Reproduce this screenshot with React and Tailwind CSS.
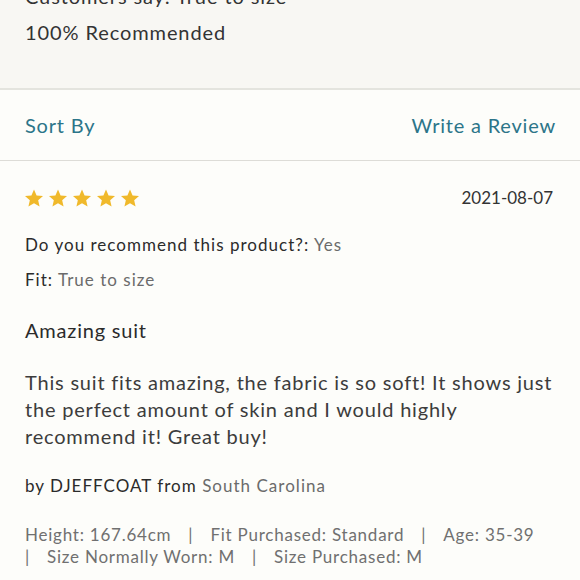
import React from 'react';

const Star = () => (
  <svg className="w-[20px] h-[20px]" viewBox="0 0 24 24" fill="#f0b92b">
    <path d="M12 1.8l3.1 7.1 7.7.7-5.8 5.1 1.7 7.6L12 18.3l-6.7 4 1.7-7.6L1.2 9.6l7.7-.7z" />
  </svg>
);

const Sep = () => <span className="mx-[17px]">|</span>;

const App = () => {
  return (
    <div className="w-[580px] h-[580px] overflow-hidden bg-[#fdfdfa] font-['Lato',sans-serif]">
      {/* Summary */}
      <div className="h-[90px] flex flex-col bg-[#f8f7f3] border-b-2 border-[#e4e4de] px-[25px]">
        <div className="-mt-[22px] text-[20px] leading-[36px] tracking-[0.045em] text-[#333]">
          <div>Customers say: True to size</div>
          <div>100% Recommended</div>
        </div>
      </div>

      {/* Actions */}
      <div className="h-[71px] border-b border-[#dddcd7] px-[25px] flex items-center justify-between text-[20px] tracking-[0.04em] text-[#2c7589]">
        <span>Sort By</span>
        <span className="-mr-[1px]">Write a Review</span>
      </div>

      {/* Review */}
      <div className="flex flex-col px-[25px]">
        <div className="mt-[25px] h-[24px] flex items-center justify-between">
          <div className="flex gap-[4px] -ml-[1px]">
            <Star />
            <Star />
            <Star />
            <Star />
            <Star />
          </div>
          <span className="text-[17px] text-[#333] mr-[2px]">2021-08-07</span>
        </div>

        <div className="mt-[23px] text-[17px] leading-[24px] tracking-[0.06em] text-[#2b2b2b]">
          Do you recommend this product?: <span className="text-[#6b6b6b]">Yes</span>
        </div>
        <div className="mt-[11px] text-[17px] leading-[24px] tracking-[0.06em] text-[#2b2b2b]">
          Fit: <span className="text-[#6b6b6b]">True to size</span>
        </div>

        <div className="mt-[24px] text-[20px] leading-[28px] tracking-[0.04em] text-[#2b2b2b]">Amazing suit</div>

        <p className="mt-[25px] text-[20px] leading-[27px] tracking-[0.04em] text-[#3c3c3c]">
          This suit fits amazing, the fabric is so soft! It shows just the perfect amount of skin and I would highly recommend it! Great buy!
        </p>

        <div className="mt-[24px] text-[17px] leading-[24px] tracking-[0.06em] text-[#2b2b2b]">
          by DJEFFCOAT from <span className="text-[#6b6b6b]">South Carolina</span>
        </div>

        <div className="mt-[26px] text-[17px] leading-[22px] tracking-[0.045em] text-[#707070] whitespace-nowrap">
          <div>
            Height: 167.64cm<Sep />Fit Purchased: Standard<Sep />Age: 35-39
          </div>
          <div>
            |<span className="ml-[17px]">Size Normally Worn: M</span><Sep />Size Purchased: M
          </div>
        </div>
      </div>
    </div>
  );
};

export default App;
